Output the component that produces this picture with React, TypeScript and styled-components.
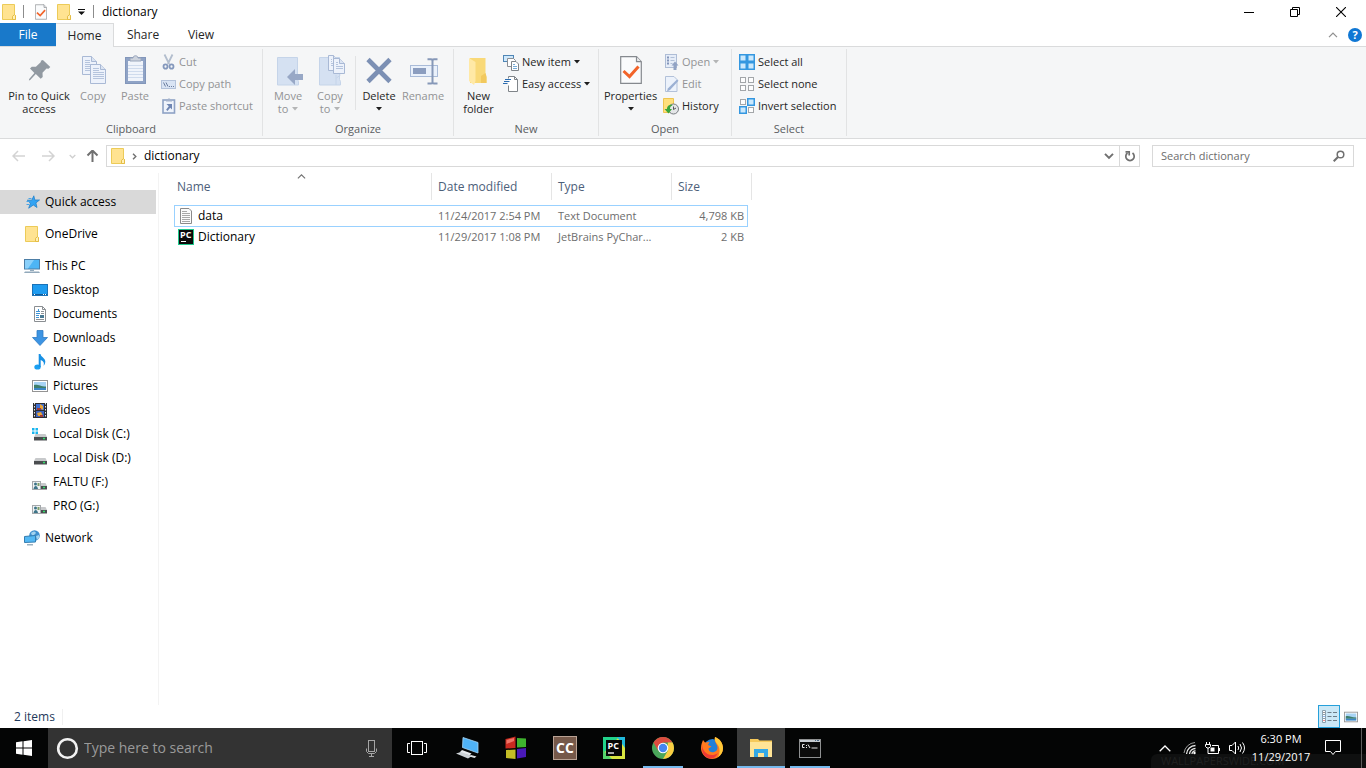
import React from "react";
import styled, { createGlobalStyle, css } from "styled-components";

const FONT = `"Open Sans", "Noto Sans", "Liberation Sans", sans-serif`;

const GlobalStyle = createGlobalStyle`
  *, *::before, *::after { box-sizing: border-box; }
  html, body { margin: 0; padding: 0; background: #fff; }
  body { font-family: ${FONT}; font-size: 12px; line-height: 16px; color: #000; overflow: hidden; }
  button, input { font: inherit; color: inherit; margin: 0; }
  svg { display: block; flex: none; }
`;

const plainButton = css`
  display: flex;
  flex: none;
  align-items: center;
  border: 0;
  padding: 0;
  background: none;
  white-space: nowrap;
`;

const Page = styled.div`
  display: flex;
  flex-direction: column;
  min-height: 100vh;
`;

/* ---------- title bar ---------- */

const TitleBar = styled.header`
  display: flex;
  align-items: center;
  height: 23px;
  padding: 0 2px;
`;

const QuickTools = styled.div`
  display: flex;
  align-items: center;
  flex: 1;
`;

const QuickButton = styled.button<{ $w: number }>`
  ${plainButton}
  justify-content: center;
  width: ${(p) => p.$w}px;
  height: 23px;
`;

const TitleRule = styled.span`
  width: 1px;
  height: 13px;
  margin: 0 8px 0 7px;
  background: #8c8c8c;
`;

const WindowTitle = styled.h1`
  margin: 0;
  font-size: 12px;
  line-height: 16px;
  font-weight: 400;
`;

const WindowButton = styled.button`
  ${plainButton}
  justify-content: center;
  width: 46px;
  height: 21px;
`;

/* ---------- ribbon tabs ---------- */

const TabBar = styled.nav`
  display: flex;
  height: 24px;
  border-bottom: 1px solid #dadbdc;
`;

const FileTab = styled.button`
  ${plainButton}
  justify-content: center;
  width: 56px;
  height: 23px;
  color: #fff;
  background: #1979ca;
`;

const Tab = styled.button<{ $active?: boolean }>`
  ${plainButton}
  justify-content: center;
  width: 58px;
  height: 24px;
  color: #262626;
  ${(p) =>
    p.$active &&
    css`
      background: #f5f6f7;
      border: 1px solid #dadbdc;
      border-width: 1px 1px 0 0;
    `}
`;

const TabTools = styled.div`
  display: flex;
  align-items: center;
  gap: 10px;
  margin-left: auto;
  padding-right: 4px;
`;

const IconButton = styled.button`
  ${plainButton}
`;

/* ---------- ribbon ---------- */

const Ribbon = styled.section`
  display: flex;
  height: 92px;
  padding: 2px 0;
  font-size: 11px;
  background: #f5f6f7;
  border-bottom: 1px solid #dadbdc;
`;

const Group = styled.div<{ $w: number }>`
  display: flex;
  flex: none;
  flex-direction: column;
  width: ${(p) => p.$w}px;
  border-right: 1px solid #e2e3e4;
`;

const GroupBody = styled.div`
  display: flex;
  flex: 1;
  padding: 2px 4px 0;
`;

const GroupName = styled.div`
  height: 15px;
  line-height: 15px;
  color: #5a5d61;
  text-align: center;
`;

const BigButton = styled.button<{ $w: number; $dim?: boolean }>`
  ${plainButton}
  flex-direction: column;
  width: ${(p) => p.$w}px;
  height: 68px;
  padding-top: 3px;
  line-height: 13px;
  color: ${(p) => (p.$dim ? "#929395" : "#262626")};
  & > svg { margin-bottom: 3px; }
`;

const BigLine = styled.span`
  display: flex;
  align-items: center;
  gap: 4px;
  min-height: 13px;
`;

const SmallColumn = styled.div<{ $left: number }>`
  display: flex;
  flex: none;
  flex-direction: column;
  padding-left: ${(p) => p.$left}px;
`;

const SmallButton = styled.button<{ $dim?: boolean }>`
  ${plainButton}
  gap: 3px;
  height: 22px;
  color: ${(p) => (p.$dim ? "#929395" : "#262626")};
`;

const InnerRule = styled.span`
  width: 1px;
  height: 54px;
  margin: 5px 3px 0 4px;
  background: #e2e3e4;
`;

/* ---------- address row ---------- */

const AddressRow = styled.div`
  display: flex;
  align-items: center;
  height: 34px;
  padding: 0 12px;
`;

const History = styled.div`
  display: flex;
  align-items: center;
  width: 94px;
`;

const HistoryButton = styled.button<{ $w: number }>`
  ${plainButton}
  width: ${(p) => p.$w}px;
`;

const AddressBox = styled.div`
  display: flex;
  align-items: center;
  flex: 1;
  height: 22px;
  margin-right: 12px;
  padding-left: 4px;
  border: 1px solid #d9d9d9;
`;

const Crumb = styled.button`
  ${plainButton}
  flex: 1;
  gap: 6px;
`;

const AddressButton = styled.button<{ $ruled?: boolean }>`
  ${plainButton}
  justify-content: center;
  width: 20px;
  height: 20px;
  border-left: ${(p) => (p.$ruled ? "1px solid #d9d9d9" : "0")};
`;

const SearchBox = styled.label`
  display: flex;
  align-items: center;
  width: 202px;
  height: 22px;
  padding: 0 8px;
  border: 1px solid #d9d9d9;
`;

const SearchInput = styled.input`
  flex: 1;
  min-width: 0;
  border: 0;
  padding: 0;
  outline: 0;
  background: none;
  font-size: 11px;
  &::placeholder { color: #6d6d6d; opacity: 1; }
`;

/* ---------- body ---------- */

const Main = styled.main`
  display: flex;
  flex: 1;
`;

const Sidebar = styled.nav`
  width: 159px;
  padding: 17px 2px 0 0;
  border-right: 1px solid #f3f3f3;
`;

const NavBlock = styled.div`
  margin-bottom: 8px;
`;

const NavItem = styled.a<{ $nested?: boolean; $active?: boolean }>`
  display: flex;
  align-items: center;
  gap: 5px;
  height: 24px;
  padding-left: ${(p) => (p.$nested ? 32 : 24)}px;
  color: #000;
  text-decoration: none;
  white-space: nowrap;
  background: ${(p) => (p.$active ? "#d9d9d9" : "transparent")};
`;

const FilePane = styled.section`
  flex: 1;
  padding-left: 15px;
`;

const FileTable = styled.table`
  width: 578px;
  table-layout: fixed;
  border-collapse: separate;
  border-spacing: 0;
`;

const HeadCell = styled.th<{ $w: number }>`
  position: relative;
  width: ${(p) => p.$w}px;
  height: 32px;
  padding: 0;
  vertical-align: top;
  text-align: left;
  font-weight: 400;
  color: #4c607a;
`;

const HeadLabel = styled.div<{ $left: number; $ruled?: boolean }>`
  height: 27px;
  padding: 6px 0 0 ${(p) => p.$left}px;
  border-right: ${(p) => (p.$ruled ? "1px solid #e5e5e5" : "0")};
`;

const SortMark = styled.span`
  position: absolute;
  top: -1px;
  left: 50%;
  margin-left: -6px;
`;

const Row = styled.tr<{ $focused?: boolean }>`
  & > td {
    height: ${(p) => (p.$focused ? 22 : 20)}px;
    padding: 0 0 0 6px;
    color: #6d6d6d;
    font-size: 11px;
    white-space: nowrap;
    border: 0 solid #99d1ff;
  }
  & > td:first-child { padding-left: 4px; color: #000; font-size: 12px; }
  & > td:nth-child(4) { padding: 0 4px 0 0; text-align: right; }
  ${(p) =>
    p.$focused &&
    css`
      & > td { border-width: 1px 0; }
      & > td:first-child { border-left-width: 1px; padding-left: 3px; }
      & > td:nth-child(4) { border-right-width: 1px; padding-right: 3px; }
    `}
`;

const FileName = styled.span`
  display: flex;
  align-items: center;
  gap: 4px;
`;

/* ---------- status bar ---------- */

const StatusBar = styled.footer`
  display: flex;
  align-items: center;
  height: 23px;
  padding: 0 4px 0 14px;
  color: #1e395b;
`;

const StatusText = styled.span`
  width: 49px;
  border-right: 1px solid #f0f0f0;
`;

const Views = styled.div`
  display: flex;
  margin-left: auto;
`;

const ViewButton = styled.button<{ $active?: boolean }>`
  ${plainButton}
  justify-content: center;
  width: 22px;
  height: 23px;
  background: ${(p) => (p.$active ? "#cbe8f6" : "transparent")};
  border: 1px solid ${(p) => (p.$active ? "#26a0da" : "transparent")};
`;

/* ---------- taskbar ---------- */

const Taskbar = styled.div`
  position: relative;
  display: flex;
  height: 40px;
  background: #040505;
  color: #fff;
`;

const StartButton = styled.button`
  ${plainButton}
  justify-content: center;
  width: 48px;
`;

const TaskSearch = styled.label`
  display: flex;
  align-items: center;
  gap: 5px;
  width: 344px;
  padding: 0 14px 0 8px;
  background: #333;
`;

const TaskSearchInput = styled.input`
  flex: 1;
  min-width: 0;
  border: 0;
  padding: 0;
  outline: 0;
  background: none;
  font-size: 14px;
  line-height: 20px;
  &::placeholder { color: #9a9a9a; opacity: 1; }
`;

const TaskApps = styled.div`
  display: flex;
  flex: 1;
  gap: 1px;
`;

const TaskButton = styled.button<{ $open?: boolean; $front?: boolean; $w?: number }>`
  ${plainButton}
  position: relative;
  justify-content: center;
  width: ${(p) => p.$w ?? 48}px;
  height: 40px;
  background: ${(p) => (p.$front ? "#3b3c3c" : "transparent")};
  &::after {
    content: "";
    display: ${(p) => (p.$open || p.$front ? "block" : "none")};
    position: absolute;
    bottom: 0;
    left: ${(p) => (p.$front ? 0 : 4)}px;
    right: ${(p) => (p.$front ? 0 : 4)}px;
    height: 2px;
    background: #76b9ed;
  }
`;

const Tray = styled.div`
  position: relative;
  z-index: 0;
  display: flex;
  align-items: center;
  padding-right: 4px;
`;

const TrayButton = styled.button<{ $w: number }>`
  ${plainButton}
  justify-content: center;
  width: ${(p) => p.$w}px;
  height: 40px;
`;

const Clock = styled.button`
  ${plainButton}
  flex-direction: column;
  justify-content: center;
  width: 64px;
  height: 40px;
  font-size: 11px;
  line-height: 18px;
`;

const ShowDesktop = styled.span`
  width: 1px;
  height: 40px;
  margin-left: 8px;
  background: #5c5c5c;
`;

const Watermark = styled.span`
  position: absolute;
  z-index: -1;
  left: 0;
  right: 0;
  bottom: 0;
  height: 14px;
  padding-left: 10px;
  border-radius: 6px 0 0 0;
  background: #0f1010;
  color: #1f2020;
  font-size: 11px;
  line-height: 14px;
`;

/* ---------- drawings ---------- */

const FolderIcon = ({ w = 14 }: { w?: number }) => (
  <svg width={w} height={16} viewBox="0 0 14 16" aria-hidden="true">
    <path d="M.5.5h12v10.5l1 .5v4H.5z" fill="#ffe391" stroke="#eccb58" />
    <path d="M10.5 15.5v-3.2l2-1.600 1 .8v4z" fill="#fff0b8" stroke="#e5bd45" />
  </svg>
);

const CheckDoc = ({ w, h }: { w: number; h: number }) => (
  <svg width={w} height={h} viewBox="0 0 22 28" aria-hidden="true">
    <path d="M.7.7h15.8l4.800 5v21.600H.7z" fill="#fafbfc" stroke="#85898e" strokeWidth="1.200" />
    <path d="M16.500.7v5h4.800" fill="#e8eaec" stroke="#85898e" strokeWidth="1.200" />
    <path d="M3.500 15l6 5.500 9-10" fill="none" stroke="#f2642a" strokeWidth="3" />
  </svg>
);

const Caret = ({ dim }: { dim?: boolean }) => (
  <svg width="6" height="4" viewBox="0 0 6 4" aria-hidden="true">
    <path d="M0 0h6L3 3.400z" fill={dim ? "#b4b5b6" : "#1e1e1e"} />
  </svg>
);

const Pin = () => (
  <svg width="32" height="32" viewBox="0 0 32 32" aria-hidden="true">
    <path d="M19.500 6.500l7.400 7-1.800 1.600-2-.2-4 4.300.2 4.200-2 1.700-4.900-4.600-5.600 5.900-1.300.4.3-1.500 5.200-5.800L6.600 15l1.800-1.900h4.100l5-4.800-.1-1.200z" transform="translate(.4 -.4)" fill="#9199a1" />
  </svg>
);

const SheetLines = ({ x, y, w, h }: { x: number; y: number; w: number; h: number }) => (
  <g>
    <path d={`M${x}.5 ${y}.5h${w - 5}l5 5v${h - 5}h-${w}z`} fill="#edf2fb" stroke="#a9b9d5" />
    <path d={`M${x + w - 5}.5 ${y}.5v5h5`} fill="#dbe4f2" stroke="#a9b9d5" />
    {Array.from({ length: Math.floor((h - 4) / 2) - 1 }, (_, i) => (
      <path key={i} d={`M${x + 3} ${y + 4.5 + i * 2}h${i < 2 ? w - 9 : w - 4}`} stroke="#b5c4dd" />
    ))}
  </g>
);

const CopyBig = () => (
  <svg width="32" height="32" viewBox="0 0 32 32" aria-hidden="true">
    <SheetLines x={5} y={2} w={14} h={18} />
    <SheetLines x={13} y={10} w={15} h={19} />
  </svg>
);

const PasteBig = () => (
  <svg width="32" height="32" viewBox="0 0 32 32" aria-hidden="true">
    <rect x="6.500" y="3.500" width="20" height="26" fill="#8fa3c6" stroke="#8296ba" />
    <rect x="9" y="7" width="15" height="20" fill="#f0f4fb" />
    <path d="M9 11.500h15M9 14.500h15M9 17.500h15M9 20.500h15M9 23.500h15" stroke="#cfdbed" />
    <path d="M11 7V4h3c0-3 5-3 5 0h3v3z" fill="#cdd3dd" stroke="#98a5bb" />
  </svg>
);

const Cut = () => (
  <svg width="15" height="16" viewBox="0 0 15 16" fill="none" aria-hidden="true">
    <path d="M3.500 0.500l4.700 9.500M11.500 0.500l-4.700 9.500" stroke="#b3bece" strokeWidth="1.800" />
    <ellipse cx="4.500" cy="12.500" rx="2" ry="2.200" stroke="#8498bc" strokeWidth="1.800" />
    <ellipse cx="10.500" cy="12.500" rx="2" ry="2.200" stroke="#8498bc" strokeWidth="1.800" />
  </svg>
);

const CopyPath = () => (
  <svg width="15" height="16" viewBox="0 0 15 16" fill="none" aria-hidden="true">
    <rect x=".500" y="4.500" width="14" height="8" fill="#d9e4f4" stroke="#b3c2da" />
    <path d="M2.500 6.500l2 4M5 6.500l2 4" stroke="#6c7e9f" />
    <path d="M8 10.500h1M10 10.500h1M12 10.500h1" stroke="#6c7e9f" />
  </svg>
);

const PasteLink = () => (
  <svg width="15" height="16" viewBox="0 0 15 16" aria-hidden="true">
    <rect x="2" y="2" width="11.500" height="13" fill="#eef3fb" stroke="#8ea2c5" strokeWidth="1.600" />
    <path d="M5 3.500V1.500h1.500c0-1.500 3-1.500 3 0H11v2z" fill="#a3b2cc" />
    <path d="M5.500 6h5.500v5.500L9.200 9.700 6.500 13l-1.400-1.300 2.700-3.400z" fill="#6f86b3" />
  </svg>
);

const PaleFolder = () => (
  <path d="M5.500 3.500h20v22l1 2v3.500h-21z" fill="#d5e1f2" stroke="#c5d4e9" />
);

const MoveTo = () => (
  <svg width="32" height="32" viewBox="0 0 32 32" aria-hidden="true">
    <PaleFolder />
    <path d="M15 24l8-8v5h8v6h-8v5z" transform="translate(0 -1)" fill="#98a8c6" />
  </svg>
);

const CopyTo = () => (
  <svg width="32" height="32" viewBox="0 0 32 32" aria-hidden="true">
    <PaleFolder />
    <path d="M22 21v10M22.500 24l4-3" stroke="#c5d4e9" />
    <SheetLines x={14} y={1} w={10} h={15} />
    <SheetLines x={19} y={4} w={11} h={15} />
  </svg>
);

const DeleteBig = () => (
  <svg width="32" height="32" viewBox="0 0 32 32" aria-hidden="true">
    <path d="M5 5.500l22 22M27 5.500l-22 22" stroke="#7c90b4" strokeWidth="4.600" />
  </svg>
);

const Rename = () => (
  <svg width="32" height="32" viewBox="0 0 32 32" fill="none" aria-hidden="true">
    <rect x="3.500" y="11.500" width="27" height="11" fill="#eaf1fb" stroke="#a9bbd8" />
    <rect x="6" y="14" width="13" height="6" fill="#8b9dbf" />
    <path d="M20.500 5.200h3.500q1.500 0 1.500 1.500 0-1.500 1.500-1.500h3.500M25.500 6v23M20.500 29.500h3.500q1.500 0 1.500-1.500 0 1.500 1.500 1.500h3.500" stroke="#8698b8" strokeWidth="2" />
  </svg>
);

const NewFolder = () => (
  <svg width="32" height="32" viewBox="0 0 32 32" aria-hidden="true">
    <path d="M7 4h15.500v18l1 1v6H7z" fill="#f9d978" />
    <path d="M18 29v-7l4.500-3 1 3.500V29z" fill="#f2c95e" />
    <path d="M6 4l6.500 4v19l-1.500 4L6 27z" fill="#ffe9a6" />
  </svg>
);

const NewItem = () => (
  <svg width="16" height="17" viewBox="0 0 16 17" aria-hidden="true">
    <rect x=".500" y="1.500" width="10" height="6" fill="#cfe8fb" stroke="#4f86b6" />
    <path d="M4.500 4.500h6l2 2v6h-8z" fill="#fff" stroke="#8b8f94" />
    <path d="M8.500 7.500h4.500l2.500 2.500v6.500H8.500z" fill="#fff" stroke="#7f8489" />
    <path d="M10 10.500h2M10 12.500h4M10 14.500h4" stroke="#78acd8" />
  </svg>
);

const EasyAccess = () => (
  <svg width="16" height="16" viewBox="0 0 16 16" fill="none" aria-hidden="true">
    <path d="M5.500 2.500v-2h6l3 3v12h-9v-6" fill="#fff" stroke="#7f8489" />
    <path d="M11.500.500v3h3" stroke="#7f8489" />
    <path d="M2 3.500h6M1 5.500h5.500M0 7.500h4.500" stroke="#2b6cb0" strokeWidth="1.200" />
  </svg>
);

const OpenIcon = () => (
  <svg width="16" height="16" viewBox="-1 0 16 16" fill="none" aria-hidden="true">
    <rect x="1.500" y=".500" width="11" height="13" fill="#e6edf8" stroke="#aebdd6" />
    <path d="M3 3.500h2M3 6.500h2M3 9.500h2" stroke="#8396ba" strokeWidth="2" />
    <path d="M6.500 3.500h4M6.500 6.500h4M6.500 9.500h2" stroke="#b1c0d8" />
    <path d="M9.500 16v-4.500H7.500L11 7.500l3.500 4H12.500V16z" fill="#91a3c4" />
  </svg>
);

const EditIcon = () => (
  <svg width="16" height="16" viewBox="-1 0 16 16" aria-hidden="true">
    <path d="M1.500 .500h8.500l3 3v12H1.500z" fill="#ecf2fb" stroke="#b2c1d9" />
    <path d="M13 3.500l1.500 1.200L6 14l-3 1.500.8-3z" fill="#9bb0d3" />
  </svg>
);

const HistoryIcon = () => (
  <svg width="16" height="17" viewBox="0 0 16 17" aria-hidden="true">
    <path d="M.500 .500h10v14H.500z" fill="#ffdf7c" stroke="#eec54f" />
    <circle cx="10.500" cy="11" r="5" fill="#e4e6e8" stroke="#777b80" />
    <path d="M10.500 8.500v3l2.500-1.500" fill="none" stroke="#555" />
    <path d="M8.500 6.500C5 7 4 9 4 11H1.500L5.500 15.500l3.500-4.500H7c0-2 .500-3 2.500-3.500z" fill="#3ba53b" />
  </svg>
);

const Grid = ({ on }: { on: boolean[] }) => (
  <svg width="16" height="16" viewBox="0 0 16 16" aria-hidden="true">
    {on.map((filled, i) => {
      const x = (i % 2) * 8;
      const y = Math.floor(i / 2) * 8;
      return filled ? (
        <rect key={i} x={x + 0.75} y={y + 0.75} width="6.5" height="6.5" fill="#cbe8fc" stroke="#3497e0" strokeWidth="1.5" />
      ) : (
        <rect key={i} x={x + 1.5} y={y + 1.5} width="5" height="5" fill="#fdfdfd" stroke="#a3a6a9" />
      );
    })}
  </svg>
);

const ArrowIcon = ({ turn, color, thick = 1.5 }: { turn: number; color: string; thick?: number }) => (
  <svg width="13" height="12" viewBox="0 0 13 12" fill="none" aria-hidden="true">
    <g transform={`rotate(${turn} 6.5 6)`} stroke={color} strokeWidth={thick}>
      <path d="M1 6h12M6 1L1 6l5 5" />
    </g>
  </svg>
);

const Chevron = ({ turn = 0, w = 8, color = "#707070", thick = 1.5 }: { turn?: number; w?: number; color?: string; thick?: number }) => (
  <svg width={w} height={w} viewBox="0 0 8 8" fill="none" aria-hidden="true">
    <path d="M.800 2.300L4 5.500l3.200-3.200" transform={`rotate(${turn} 4 4)`} stroke={color} strokeWidth={thick} />
  </svg>
);

const Star = () => (
  <svg width="16" height="16" viewBox="0 0 16 16" aria-hidden="true">
    <path d="M9.800 1.800l1 4.200h4.700l-3.600 2.900 1.100 4.600-3.700-2.500-4.600 3.200 1.700-5L3.300 6.200h4.500z" fill="#33a3f2" stroke="#2281cb" strokeWidth=".800" />
    <path d="M4.500 4.500h3M2.500 7.500h3M2.500 10.500h2.500" stroke="#4aa5e6" />
  </svg>
);

const Pc = () => (
  <svg width="16" height="16" viewBox="0 0 16 16" aria-hidden="true">
    <rect x=".500" y="1.500" width="15" height="9.500" fill="#4db5f5" stroke="#4d7ea6" />
    <path d="M1 2h9l-6 8.500H1z" fill="#8ad0fa" />
    <path d="M6 11.500h4v1.500H6zM1 13.500h14l1 1.500H0z" fill="#92a9bb" />
  </svg>
);

const Desktop = () => (
  <svg width="16" height="16" viewBox="0 0 16 16" aria-hidden="true">
    <rect x=".500" y="2.500" width="15" height="11" fill="#1f9cf0" stroke="#1a72b8" />
    <path d="M1 12.500h14" stroke="#135b97" />
    <path d="M2 12.500h1M11 12.500h1M13 12.500h1" stroke="#fff" />
  </svg>
);

const Documents = () => (
  <svg width="16" height="16" viewBox="0 0 16 16" aria-hidden="true">
    <path d="M2.500.500h8l3 3v12h-11z" fill="#fff" stroke="#8a8e92" />
    <path d="M10.500.500v3h3" fill="none" stroke="#8a8e92" />
    <path d="M4 5.500h4M6.500 3v3M4 7.500h4M4 9.500h3M4 11.500h3" stroke="#3d93d6" />
    <path d="M9 5.500h3M9 7.500h3M4 13.500h8" stroke="#8d9297" />
    <path d="M8 9h4v3H8z" fill="#4a7a94" />
  </svg>
);

const Downloads = () => (
  <svg width="16" height="16" viewBox="0 0 16 16" aria-hidden="true">
    <path d="M5 .500h6v7h4.500L8 15.500.500 7.500H5z" fill="#3c94e3" stroke="#2f7bc4" strokeWidth=".800" />
  </svg>
);

const Music = () => (
  <svg width="16" height="16" viewBox="0 0 16 16" aria-hidden="true">
    <ellipse cx="5.500" cy="13" rx="3.200" ry="2.600" fill="#1aa0f2" />
    <path d="M6.700 0h1.800c.3 3 4.800 4 4.800 7.500 0 2-.8 3.300-1.700 4.300.8-3 .1-5-2.900-5.900V13H6.700z" fill="#1790e4" />
  </svg>
);

const Picture = ({ w = 16, h = 16 }: { w?: number; h?: number }) => (
  <svg width={w} height={h} viewBox="0 0 16 16" aria-hidden="true">
    <rect x=".500" y="2.500" width="15" height="11" fill="#fff" stroke="#949494" />
    <rect x="2" y="4" width="12" height="8" fill="#a8d4f5" />
    <path d="M2 7c4-1 6 1.500 12 1.500V10H2z" fill="#3f7f6c" />
    <path d="M2 10h12v2H2z" fill="#3c86c6" />
  </svg>
);

const Videos = () => (
  <svg width="16" height="16" viewBox="0 0 16 16" aria-hidden="true">
    <rect x="1" y="1" width="14" height="15" fill="#2d2f33" />
    <path d="M2.500 1v15M13.500 1v15" stroke="#e7e7e7" strokeDasharray="1.500 1.500" />
    <rect x="4" y="2" width="8" height="6" fill="#3f6fd0" />
    <rect x="4" y="9" width="8" height="6" fill="#3b62bf" />
    <path d="M8 2v4l3 2V4zM5 11l4-1 2 4H6z" fill="#e9a536" />
    <path d="M5 6h4v2H5zM8 13h3v2H8z" fill="#a33b32" />
  </svg>
);

const Disk = ({ kind }: { kind: "win" | "plain" | "shared" }) => (
  <svg width="16" height="16" viewBox="0 0 16 16" aria-hidden="true">
    <g transform={kind === "shared" ? "translate(0 2)" : "translate(0 1)"}>
      <path d="M3.500 7h10l1.500 3H2z" fill="#c7c9cb" />
      <path d="M2 10h13v3.500H2z" fill="#4a4d50" />
      <path d="M11 11.500h2" stroke="#32e06a" strokeWidth="1.500" />
    </g>
    {kind === "win" && <path d="M0 2h2.500v2.500H0zM3.500 2H6v2.500H3.500zM0 5.500h2.500V8H0zM3.500 5.500H6V8H3.500z" fill="#19b5ee" />}
    {kind === "shared" && (
      <g transform="translate(0 1)">
        <rect x=".500" y="6.500" width="8" height="8" fill="#f1f3f4" stroke="#a5a9ac" />
        <path d="M2 9a1.500 1.500 0 1 1 3 0 1.500 1.500 0 0 1-3 0zM1.500 14c.500-4 4-4 4.500 0z" fill="#3d7488" />
        <path d="M5.500 8h2v3h-2z" fill="#7d9c6a" />
      </g>
    )}
  </svg>
);

const Network = () => (
  <svg width="16" height="16" viewBox="0 0 16 16" aria-hidden="true">
    <circle cx="10.500" cy="5.500" r="5.300" fill="#3d8fcf" />
    <path d="M7 3c2-2 4-2 5 0l-2 2-2 .500zM12 6l3-1v3l-2 2z" fill="#a3d3ef" />
    <path d="M.500 6.500l11-1v6.500l-11 .500z" fill="#53b8f4" stroke="#347db0" />
    <path d="M3 14h6v1.500H3z" fill="#9bb0bf" />
  </svg>
);

const TextFile = () => (
  <svg width="16" height="16" viewBox="0 0 16 16" aria-hidden="true">
    <path d="M2.500.500h8.500l2.500 2.500v12.500h-11z" fill="#fbfbfb" stroke="#8a8a8a" />
    <path d="M4 3.500h5M4 5.500h8M4 7.500h8M4 9.500h8M4 11.500h8M4 13.500h8" stroke="#a8a8a8" />
  </svg>
);

const IconLetters = styled.text`
  font-family: "Open Sans", sans-serif;
  font-weight: 700;
  fill: #fff;
`;

const PyFile = () => (
  <svg width="16" height="16" viewBox="0 0 16 16" aria-hidden="true">
    <rect width="16" height="16" fill="#1fc98d" />
    <rect x="1" y="1" width="14" height="14" fill="#0b0b0b" />
    <IconLetters x="2" y="9" fontSize="9">PC</IconLetters>
    <path d="M3 12.500h5" stroke="#fff" />
  </svg>
);

const Refresh = () => (
  <svg width="12" height="12" viewBox="0 0 12 12" fill="none" aria-hidden="true">
    <path d="M8.500 3A4.200 4.200 0 1 1 3.500 3" stroke="#707070" strokeWidth="1.700" />
    <path d="M1.500 1.800h3.700v3.700" stroke="#707070" strokeWidth="1.700" />
  </svg>
);

const Magnifier = () => (
  <svg width="12" height="12" viewBox="0 0 12 12" fill="none" aria-hidden="true">
    <circle cx="7.500" cy="4.500" r="3.300" stroke="#707070" strokeWidth="1.500" />
    <path d="M5 7L.700 11.300" stroke="#707070" strokeWidth="2" />
  </svg>
);

const Help = () => (
  <svg width="14" height="14" viewBox="0 0 14 14" aria-hidden="true">
    <circle cx="7" cy="7" r="7" fill="#0f77d4" />
    <IconLetters x="4.500" y="11" fontSize="11">?</IconLetters>
  </svg>
);

const DetailsView = () => (
  <svg width="17" height="15" viewBox="0 0 17 15" fill="none" aria-hidden="true">
    <path d="M1.500 1.500h3v4h-3zM1.500 5.500h3v4h-3zM1.500 9.500h3v4h-3z" fill="#fff" stroke="#8aa0ae" />
    <path d="M2.500 3.500h1" stroke="#333" />
    <path d="M2.500 7.500h1" stroke="#1b6fd0" />
    <path d="M2.500 11.500h1" stroke="#d22" />
    <path d="M6.500 3.500h4M12 3.500h4M6.500 7.500h4M12 7.500h4M6.500 11.500h4M12 11.500h4" stroke="#6d7d88" />
  </svg>
);

const WinLogo = () => (
  <svg width="16" height="16" viewBox="0 0 16 16" fill="#fff" aria-hidden="true">
    <path d="M0 2.200l6.500-.9v6.200H0zM7.500 1.200L16 0v7.500H7.500zM0 8.500h6.500v6.200L0 13.800zM7.500 8.500H16V16l-8.500-1.200z" />
  </svg>
);

const CortanaRing = () => (
  <svg width="23" height="23" viewBox="0 0 23 23" aria-hidden="true">
    <circle cx="11.500" cy="11.500" r="9.300" fill="none" stroke="#f2f2f2" strokeWidth="2.600" />
  </svg>
);

const Mic = () => (
  <svg width="13" height="17" viewBox="0 0 13 17" fill="none" stroke="#a5a5a5" aria-hidden="true">
    <rect x="3.500" y=".500" width="6" height="11" />
    <path d="M1.500 8.500v3l2 2h6l2-2v-3M6.500 13.500v3M4 16.500h5" />
  </svg>
);

const TaskViewIcon = () => (
  <svg width="20" height="14" viewBox="0 0 20 14" fill="none" stroke="#fff" aria-hidden="true">
    <rect x="4.500" y=".500" width="11" height="13" />
    <path d="M3 2.500H.500v9H3M17 2.500h2.500v9H17" />
  </svg>
);

const LaptopApp = () => (
  <svg width="24" height="24" viewBox="0 0 24 24" aria-hidden="true">
    <path d="M8 1.500l15 5v10.500L7.500 11.500z" fill="#4fb2f6" stroke="#a7d7f8" strokeWidth=".800" />
    <path d="M7 14l9.500 3.500-2 2-10-3z" fill="#e8ebee" />
    <path d="M1 17.500l5-1.500 11 4-4 2.500z" fill="#cdd2d6" />
    <path d="M16 19l5.500 1.500-2 1.500-5-1.500z" fill="#dde0e3" />
  </svg>
);

const BlocksApp = () => (
  <svg width="24" height="24" viewBox="0 0 24 24" aria-hidden="true">
    <path d="M1.500 3l10-2.500V12l-10 .500z" fill="#c92a20" />
    <path d="M13 2l9 .500v8.500L13 11.500z" fill="#3fb22e" />
    <path d="M2 14l9.500-.500v9.500l-9.500-1z" fill="#c4bd26" />
    <path d="M13 13l9-1v9l-9 1.500z" fill="#4a19b8" />
    <path d="M2.500 4l7.500-2v3l-7.500 3z" fill="#ef7466" />
  </svg>
);

const CcApp = () => (
  <svg width="24" height="24" viewBox="0 0 24 24" aria-hidden="true">
    <rect x=".500" y=".500" width="23" height="23" fill="#76594a" stroke="#b9a294" />
    <IconLetters x="3" y="17" fontSize="14">CC</IconLetters>
  </svg>
);

const PyCharmApp = () => (
  <svg width="22" height="22" viewBox="0 0 22 22" aria-hidden="true">
    <path d="M0 0h22v22H0z" fill="#22d38b" />
    <path d="M22 6v16H6L0 17 16 0z" fill="#d9e540" />
    <path d="M14 0h8v11z" fill="#20b9dc" />
    <path d="M0 13l9 9H0z" fill="#54d36b" />
    <rect x="3" y="3" width="16" height="16" fill="#060606" />
    <IconLetters x="4.500" y="12" fontSize="9">PC</IconLetters>
    <path d="M5 16h6" stroke="#fff" strokeWidth="1.300" />
  </svg>
);

const ChromeApp = () => (
  <svg width="22" height="22" viewBox="0 0 22 22" aria-hidden="true">
    <circle cx="11" cy="11" r="11" fill="#4aa65a" />
    <path d="M1.500 5.500A11 11 0 0 1 20.500 5.500H11L6.200 13.700z" fill="#dc4c3f" />
    <path d="M20.500 5.500A11 11 0 0 1 11 22l4.800-8.300V5.500z" fill="#fbcd42" />
    <circle cx="11" cy="11" r="5.300" fill="#fff" />
    <circle cx="11" cy="11" r="4.200" fill="#4586f0" />
  </svg>
);

const FirefoxApp = () => (
  <svg width="22" height="22" viewBox="0 0 22 22" aria-hidden="true">
    <circle cx="11.500" cy="11" r="9" fill="#2180d8" />
    <path d="M14 0c4.500 1.500 8 6 8 11a11 11 0 0 1-22 0c0-3 1-5.500 2-8l2 2.500L8.500 5 7 8l3.500 1.500-3 2c0 3 3 4.500 5.500 3.500 3.500-1 4-4 3-6.500C15 6 13 4 14 0z" fill="#ff7a1f" />
    <path d="M14 0c4.500 1.500 8 6 8 11a11 11 0 0 1-5 9.200c2-4 2-8 .500-11.200C16 6 13 4 14 0z" fill="#ffc938" />
    <path d="M1 7c0 6 4 11 10 11 2 0 4-.500 6-2-2 4-5 6-8 5.500C4 21 0 16.500 1 7z" fill="#ee3a35" />
  </svg>
);

const ExplorerApp = () => (
  <svg width="22" height="20" viewBox="0 0 22 20" aria-hidden="true">
    <path d="M0 2.500V1h8l1.500 1.500H22V19H0z" fill="#f6c95a" />
    <path d="M0 4h22v15H0z" fill="#ffe496" />
    <path d="M4 19v-8h14v8h-4v-4H8v4z" fill="#35a9e6" />
  </svg>
);

const ConsoleApp = () => (
  <svg width="22" height="19" viewBox="0 0 22 19" aria-hidden="true">
    <rect x=".500" y=".500" width="21" height="18" fill="#0b0b0b" stroke="#8e9091" />
    <path d="M1 1h20v2H1z" fill="#c7ccd1" />
    <path d="M16 1.500h1M18 1.500h2" stroke="#4e6a86" />
    <path d="M5.500 5.500H3.500v3h2M7.500 6v1M7.500 8v1M9 5.500l2 3.500M12.500 9h6" fill="none" stroke="#e5e5e5" />
  </svg>
);

const Wifi = () => (
  <svg width="14" height="14" viewBox="0 0 14 14" fill="none" stroke="#e8e8e8" aria-hidden="true">
    <path d="M1 12A12 12 0 0 1 12 1.500" stroke="#9a9a9a" />
    <path d="M3.500 13A9 9 0 0 1 12.500 4.500M6.500 13A6 6 0 0 1 12.500 7.500M9 13a3 3 0 0 1 3.500-3" strokeWidth="1.300" />
    <circle cx="11.500" cy="12" r="1.200" fill="#fff" stroke="none" />
  </svg>
);

const Battery = () => (
  <svg width="16" height="13" viewBox="0 0 16 13" fill="none" stroke="#fff" aria-hidden="true">
    <path d="M1.500 0v2.500M4.500 0v2.500M.500 2.500h5v2l-1.500 1.500h-2L.500 4.500zM3 6v5.500h10.500v-8H7" />
    <path d="M14.500 6v3" />
    <path d="M5.500 5.500h4v4h-4z" fill="#fff" stroke="none" />
  </svg>
);

const Speaker = () => (
  <svg width="17" height="14" viewBox="0 0 17 14" fill="none" stroke="#fff" aria-hidden="true">
    <path d="M.500 4.500h2.500L6.500 1v12L3 9.500H.500z" />
    <path d="M9 5q1.300 2 0 4M11 3q3 4 0 8M13.500 1.500q4 5.500 0 11" />
  </svg>
);

const Notice = () => (
  <svg width="16" height="16" viewBox="0 0 16 16" fill="none" stroke="#fff" aria-hidden="true">
    <path d="M.500.500h15v11H10.500L8 14.500 5.500 11.500H.500z" />
  </svg>
);

/* ---------- page ---------- */

const places: { name: string; icon: React.ReactNode }[] = [
  { name: "Desktop", icon: <Desktop /> },
  { name: "Documents", icon: <Documents /> },
  { name: "Downloads", icon: <Downloads /> },
  { name: "Music", icon: <Music /> },
  { name: "Pictures", icon: <Picture /> },
  { name: "Videos", icon: <Videos /> },
  { name: "Local Disk (C:)", icon: <Disk kind="win" /> },
  { name: "Local Disk (D:)", icon: <Disk kind="plain" /> },
  { name: "FALTU (F:)", icon: <Disk kind="shared" /> },
  { name: "PRO (G:)", icon: <Disk kind="shared" /> },
];

const files = [
  { name: "data", icon: <TextFile />, date: "11/24/2017 2:54 PM", type: "Text Document", size: "4,798 KB", focused: true },
  { name: "Dictionary", icon: <PyFile />, date: "11/29/2017 1:08 PM", type: "JetBrains PyChar...", size: "2 KB", focused: false },
];

export default function App() {
  return (
    <Page>
      <GlobalStyle />
      <TitleBar>
        <QuickTools>
          <QuickButton $w={14} aria-label="Window menu"><FolderIcon /></QuickButton>
          <TitleRule />
          <QuickButton $w={18} aria-label="Properties"><CheckDoc w={12} h={16} /></QuickButton>
          <QuickButton $w={27} aria-label="New folder"><FolderIcon /></QuickButton>
          <QuickButton $w={9} aria-label="Customize toolbar">
            <svg width="7" height="6" viewBox="0 0 7 6" aria-hidden="true">
              <path d="M0 0h7v1H0zM0 2.500h7L3.500 6z" fill="#111" />
            </svg>
          </QuickButton>
          <TitleRule />
          <WindowTitle>dictionary</WindowTitle>
        </QuickTools>
        <WindowButton aria-label="Minimize">
          <svg width="10" height="10" viewBox="0 0 10 10"><path d="M0 5.500h10" stroke="#000" /></svg>
        </WindowButton>
        <WindowButton aria-label="Restore">
          <svg width="10" height="10" viewBox="0 0 10 10" fill="none" stroke="#000">
            <path d="M.500 2.500h7v7h-7zM2.500 2.500v-2h7v7h-2" />
          </svg>
        </WindowButton>
        <WindowButton aria-label="Close">
          <svg width="10" height="10" viewBox="0 0 10 10"><path d="M0 0l10 10M10 0L0 10" stroke="#000" strokeWidth="1.100" /></svg>
        </WindowButton>
      </TitleBar>

      <TabBar>
        <FileTab>File</FileTab>
        <Tab $active>Home</Tab>
        <Tab>Share</Tab>
        <Tab>View</Tab>
        <TabTools>
          <IconButton aria-label="Collapse ribbon"><Chevron turn={180} w={10} color="#8f8f8f" thick={1} /></IconButton>
          <IconButton aria-label="Help"><Help /></IconButton>
        </TabTools>
      </TabBar>

      <Ribbon>
        <Group $w={263}>
          <GroupBody>
            <BigButton $w={70}><Pin /><BigLine>Pin to Quick</BigLine><BigLine>access</BigLine></BigButton>
            <BigButton $w={38} $dim><CopyBig /><BigLine>Copy</BigLine></BigButton>
            <BigButton $w={46} $dim><PasteBig /><BigLine>Paste</BigLine></BigButton>
            <SmallColumn $left={3}>
              <SmallButton $dim><Cut />Cut</SmallButton>
              <SmallButton $dim><CopyPath />Copy path</SmallButton>
              <SmallButton $dim><PasteLink />Paste shortcut</SmallButton>
            </SmallColumn>
          </GroupBody>
          <GroupName>Clipboard</GroupName>
        </Group>
        <Group $w={191}>
          <GroupBody>
            <BigButton $w={42} $dim><MoveTo /><BigLine>Move</BigLine><BigLine>to <Caret dim /></BigLine></BigButton>
            <BigButton $w={42} $dim><CopyTo /><BigLine>Copy</BigLine><BigLine>to <Caret dim /></BigLine></BigButton>
            <InnerRule />
            <BigButton $w={40}><DeleteBig /><BigLine>Delete</BigLine><BigLine><Caret /></BigLine></BigButton>
            <BigButton $w={48} $dim><Rename /><BigLine>Rename</BigLine></BigButton>
          </GroupBody>
          <GroupName>Organize</GroupName>
        </Group>
        <Group $w={145}>
          <GroupBody>
            <BigButton $w={41}><NewFolder /><BigLine>New</BigLine><BigLine>folder</BigLine></BigButton>
            <SmallColumn $left={4}>
              <SmallButton><NewItem />New item <Caret /></SmallButton>
              <SmallButton><EasyAccess />Easy access <Caret /></SmallButton>
            </SmallColumn>
          </GroupBody>
          <GroupName>New</GroupName>
        </Group>
        <Group $w={133}>
          <GroupBody>
            <BigButton $w={55}>
              <svg width="32" height="32" viewBox="0 0 32 32" aria-hidden="true"><g transform="translate(5 2)"><CheckDoc w={22} h={28} /></g></svg>
              <BigLine>Properties</BigLine><BigLine><Caret /></BigLine>
            </BigButton>
            <SmallColumn $left={5}>
              <SmallButton $dim><OpenIcon />Open <Caret dim /></SmallButton>
              <SmallButton $dim><EditIcon />Edit</SmallButton>
              <SmallButton><HistoryIcon />History</SmallButton>
            </SmallColumn>
          </GroupBody>
          <GroupName>Open</GroupName>
        </Group>
        <Group $w={115}>
          <GroupBody>
            <SmallColumn $left={3}>
              <SmallButton><Grid on={[true, true, true, true]} />Select all</SmallButton>
              <SmallButton><Grid on={[false, false, false, false]} />Select none</SmallButton>
              <SmallButton><Grid on={[false, true, true, false]} />Invert selection</SmallButton>
            </SmallColumn>
          </GroupBody>
          <GroupName>Select</GroupName>
        </Group>
      </Ribbon>

      <AddressRow>
        <History>
          <HistoryButton $w={30} aria-label="Back"><ArrowIcon turn={0} color="#d3d3d3" /></HistoryButton>
          <HistoryButton $w={27} aria-label="Forward"><ArrowIcon turn={180} color="#d3d3d3" /></HistoryButton>
          <HistoryButton $w={17} aria-label="Recent locations"><Chevron w={7} color="#cfcfcf" /></HistoryButton>
          <HistoryButton $w={20} aria-label="Up"><ArrowIcon turn={90} color="#707070" thick={2} /></HistoryButton>
        </History>
        <AddressBox>
          <Crumb><FolderIcon /><Chevron turn={-90} w={7} thick={1.6} />dictionary</Crumb>
          <AddressButton aria-label="Previous locations"><Chevron w={10} thick={1.6} /></AddressButton>
          <AddressButton $ruled aria-label="Refresh"><Refresh /></AddressButton>
        </AddressBox>
        <SearchBox>
          <SearchInput type="text" placeholder="Search dictionary" aria-label="Search dictionary" />
          <Magnifier />
        </SearchBox>
      </AddressRow>

      <Main>
        <Sidebar>
          <NavBlock><NavItem href="#quick" $active><Star />Quick access</NavItem></NavBlock>
          <NavBlock><NavItem href="#onedrive"><FolderIcon w={16} />OneDrive</NavItem></NavBlock>
          <NavBlock>
            <NavItem href="#pc"><Pc />This PC</NavItem>
            {places.map((p) => (
              <NavItem key={p.name} href="#place" $nested>{p.icon}{p.name}</NavItem>
            ))}
          </NavBlock>
          <NavBlock><NavItem href="#network"><Network />Network</NavItem></NavBlock>
        </Sidebar>
        <FilePane>
          <FileTable>
            <thead>
              <tr>
                <HeadCell $w={258}>
                  <HeadLabel $left={3} $ruled>Name</HeadLabel>
                  <SortMark><Chevron turn={180} w={9} thick={1} /></SortMark>
                </HeadCell>
                <HeadCell $w={120}><HeadLabel $left={6} $ruled>Date modified</HeadLabel></HeadCell>
                <HeadCell $w={120}><HeadLabel $left={6} $ruled>Type</HeadLabel></HeadCell>
                <HeadCell $w={76}><HeadLabel $left={6}>Size</HeadLabel></HeadCell>
                <HeadCell $w={4} as="td"><HeadLabel $left={0} $ruled /></HeadCell>
              </tr>
            </thead>
            <tbody>
              {files.map((f) => (
                <Row key={f.name} $focused={f.focused}>
                  <td><FileName>{f.icon}{f.name}</FileName></td>
                  <td>{f.date}</td>
                  <td>{f.type}</td>
                  <td>{f.size}</td>
                </Row>
              ))}
            </tbody>
          </FileTable>
        </FilePane>
      </Main>

      <StatusBar>
        <StatusText>2 items</StatusText>
        <Views>
          <ViewButton $active aria-label="Details view"><DetailsView /></ViewButton>
          <ViewButton aria-label="Large icons view"><Picture w={14} h={14} /></ViewButton>
        </Views>
      </StatusBar>

      <Taskbar>
        <StartButton aria-label="Start"><WinLogo /></StartButton>
        <TaskSearch>
          <CortanaRing />
          <TaskSearchInput type="text" placeholder="Type here to search" aria-label="Type here to search" />
          <Mic />
        </TaskSearch>
        <TaskApps>
          <TaskButton $w={50} aria-label="Task view"><TaskViewIcon /></TaskButton>
          <TaskButton aria-label="Remote computer"><LaptopApp /></TaskButton>
          <TaskButton aria-label="Blocks"><BlocksApp /></TaskButton>
          <TaskButton aria-label="CC"><CcApp /></TaskButton>
          <TaskButton aria-label="PyCharm"><PyCharmApp /></TaskButton>
          <TaskButton $open aria-label="Chrome"><ChromeApp /></TaskButton>
          <TaskButton aria-label="Firefox"><FirefoxApp /></TaskButton>
          <TaskButton $front aria-label="File Explorer"><ExplorerApp /></TaskButton>
          <TaskButton $open aria-label="Command Prompt"><ConsoleApp /></TaskButton>
        </TaskApps>
        <Tray>
          <Watermark>WALLPAPERSWIDE.COM</Watermark>
          <TrayButton $w={28} aria-label="Show hidden icons">
            <svg width="12" height="7" viewBox="0 0 12 7" fill="none"><path d="M.700 6.300L6 1l5.300 5.300" stroke="#fff" strokeWidth="1.300" /></svg>
          </TrayButton>
          <TrayButton $w={22} aria-label="Wi-Fi"><Wifi /></TrayButton>
          <TrayButton $w={24} aria-label="Battery"><Battery /></TrayButton>
          <TrayButton $w={24} aria-label="Volume"><Speaker /></TrayButton>
          <Clock><span>6:30 PM</span><span>11/29/2017</span></Clock>
          <TrayButton $w={40} aria-label="Notifications"><Notice /></TrayButton>
          <ShowDesktop />
        </Tray>
      </Taskbar>
    </Page>
  );
}
